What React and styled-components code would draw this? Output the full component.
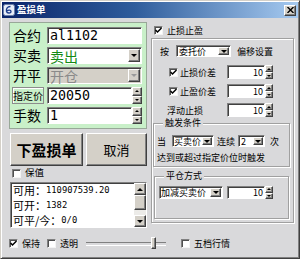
import React from 'react';
import styled, { createGlobalStyle } from 'styled-components';

const CJK = `"Noto Sans CJK SC", "Liberation Sans", sans-serif`;
const MONO = `"DejaVu Sans Mono", "Liberation Mono", monospace`;
const FACE = '#d4d0c8';
const BG = '#d9d9db';

const GlobalStyle = createGlobalStyle`
  html, body { margin: 0; padding: 0; background: #ffffff; }
  * { box-sizing: border-box; }
`;

const raised = `
  border: 1px solid;
  border-color: #ffffff #404040 #404040 #ffffff;
  box-shadow: inset -1px -1px 0 #808080;
`;

const sunken = `
  border: 1px solid;
  border-color: #808080 #ffffff #ffffff #808080;
  box-shadow: inset 1px 1px 0 #404040;
`;

const Window = styled.div`
  width: 300px;
  height: 259px;
  display: flex;
  flex-direction: column;
  padding: 1px;
  background: ${BG};
  border: 1px solid;
  border-color: ${FACE} #404040 #404040 ${FACE};
  box-shadow: inset 1px 1px 0 #ffffff, inset -1px -1px 0 #808080;
  font-family: ${CJK};
  font-size: 9px;
  line-height: 1;
  color: #000;
  overflow: hidden;
`;

const TitleBar = styled.div`
  height: 16px;
  flex: none;
  display: flex;
  align-items: center;
  gap: 2px;
  padding: 0 2px 0 1px;
  background: linear-gradient(90deg, #0a246a 0%, #2f5d9c 45%, #a6caf0 100%);
`;

const TitleText = styled.span`
  color: #fff;
  font-weight: 700;
  font-size: 9.5px;
`;

const CloseBtn = styled.span`
  margin-left: auto;
  width: 12px;
  height: 11px;
  background: ${FACE};
  ${raised}
  display: flex;
  align-items: center;
  justify-content: center;
`;

const Body = styled.div`
  height: 214px;
  flex: none;
  display: flex;
  gap: 4px;
  padding: 4px 4px 0 7px;
`;

const LeftCol = styled.div`
  width: 138px;
  display: flex;
  flex-direction: column;
`;

const OrderPanel = styled.div`
  height: 107px;
  flex: none;
  display: grid;
  grid-template-columns: 34px 95px;
  grid-auto-rows: 17px;
  row-gap: 3px;
  align-items: center;
  padding: 4px 4px 4px 3px;
  background: #c9f0c9;
  border: 1px solid #98a898;
`;

const FieldLabel = styled.span`
  font-size: 14px;
  line-height: 17px;
`;

const LabelBox = styled.span`
  margin-left: -1px;
  width: 32px;
  height: 17px;
  display: flex;
  align-items: center;
  justify-content: center;
  font-size: 10px;
  border: 1px solid #8c8c8c;
  box-shadow: inset 1px 1px 0 #ffffff;
`;

const Field = styled.div`
  height: ${p => p.$h || 17}px;
  width: ${p => (p.$w ? `${p.$w}px` : 'auto')};
  flex: ${p => (p.$grow ? 1 : 'none')};
  display: flex;
  align-items: center;
  background: ${p => (p.$disabled ? FACE : '#ffffff')};
  ${sunken}
`;

const FieldText = styled.span`
  flex: 1;
  padding-left: ${p => p.$pl ?? 2}px;
  padding-right: ${p => p.$pr ?? 0}px;
  font-family: ${p => (p.$mono ? MONO : CJK)};
  font-size: ${p => p.$size || 9}px;
  line-height: 1;
  color: ${p => p.$color || '#000'};
  text-align: ${p => p.$align || 'left'};
  white-space: nowrap;
`;

const DropBtn = styled.span`
  width: ${p => p.$w || 11}px;
  flex: none;
  align-self: stretch;
  margin: 1px;
  background: ${FACE};
  ${raised}
  display: flex;
  align-items: center;
  justify-content: center;
  &::after {
    content: '';
    border-left: 3px solid transparent;
    border-right: 3px solid transparent;
    border-top: 3px solid ${p => (p.$disabled ? '#9a9a9a' : '#000')};
  }
`;

const SpinWrap = styled.div`
  display: flex;
  width: ${p => p.$w}px;
  height: ${p => p.$h}px;
`;

const SpinButtons = styled.div`
  width: ${p => p.$w || 8}px;
  flex: none;
  display: flex;
  flex-direction: column;
`;

const SpinBtn = styled.span`
  flex: 1;
  background: ${FACE};
  ${raised}
  display: flex;
  align-items: center;
  justify-content: center;
  &::after {
    content: '';
    border-left: 2px solid transparent;
    border-right: 2px solid transparent;
    ${p => (p.$down ? 'border-top: 2px solid #000;' : 'border-bottom: 2px solid #000;')}
  }
`;

const ButtonRow = styled.div`
  margin-top: 4px;
  height: 33px;
  display: flex;
  gap: 3px;
  padding-left: 1px;
`;

const PushButton = styled.div`
  width: ${p => p.$w}px;
  background: ${FACE};
  ${raised}
  display: flex;
  align-items: center;
  justify-content: center;
  font-size: ${p => (p.$primary ? 15 : 13)}px;
  font-weight: ${p => (p.$primary ? 700 : 400)};
`;

const CheckLine = styled.div`
  display: flex;
  align-items: center;
  gap: 4px;
  height: ${p => p.$h || 12}px;
  margin-top: ${p => p.$mt || 0}px;
  padding-left: ${p => p.$pl || 0}px;
  font-size: ${p => p.$size || 9}px;
`;

const Box = styled.span`
  width: 9px;
  height: 9px;
  flex: none;
  background: #fff;
  border: 1px solid;
  border-color: #808080 #f4f4f4 #f4f4f4 #808080;
  box-shadow: inset 1px 1px 0 #505050;
  display: flex;
  align-items: center;
  justify-content: center;
`;

const ListBox = styled.div`
  margin: 4px 0 0 1px;
  width: 137px;
  height: 46px;
  display: flex;
  background: #fff;
  ${sunken}
`;

const ListRows = styled.div`
  flex: 1;
  padding-left: 1px;
`;

const ListRow = styled.div`
  height: 15px;
  display: flex;
  align-items: center;
  padding-left: 1px;
  font-size: 11px;
`;

const Digits = styled.span`
  font-family: ${MONO};
  font-size: 8.8px;
`;

const ScrollBar = styled.div`
  width: 12px;
  display: flex;
  flex-direction: column;
  background: #ecebe8;
`;

const ScrollArrow = styled.span`
  height: 12px;
  background: ${FACE};
  ${raised}
  display: flex;
  align-items: center;
  justify-content: center;
  &::after {
    content: '';
    border-left: 3px solid transparent;
    border-right: 3px solid transparent;
    ${p => (p.$down ? 'border-top: 3px solid #000;' : 'border-bottom: 3px solid #000;')}
  }
`;

const ScrollThumb = styled.span`
  height: 15px;
  background: ${FACE};
  ${raised}
`;

const ScrollTrack = styled.span`
  flex: 1;
`;

const RightCol = styled.div`
  width: 143px;
  display: flex;
  flex-direction: column;
`;

const Group = styled.div`
  height: 185px;
  flex: none;
  display: flex;
  flex-direction: column;
  padding-top: 6px;
  border: 1px solid #a0a0a0;
  box-shadow: inset 1px 1px 0 #ffffff, 1px 1px 0 #ffffff;
`;

const Row = styled.div`
  display: flex;
  align-items: center;
  height: ${p => p.$h || 12}px;
  margin-top: ${p => p.$mt || 0}px;
  padding-left: ${p => p.$pl || 0}px;
  gap: ${p => p.$gap || 0}px;
  white-space: nowrap;
`;

const Gap = styled.span`
  width: ${p => p.$w}px;
  flex: none;
`;

const OptionLabel = styled.div`
  width: 75px;
  display: flex;
  align-items: center;
  gap: 2px;
  padding-left: ${p => p.$pl}px;
`;

const Fieldset = styled.fieldset`
  margin: ${p => p.$margin};
  padding: 0 0 ${p => p.$pb}px 0;
  min-width: 0;
  border: 1px solid #a0a0a0;
  box-shadow: inset 1px 1px 0 #ffffff, 1px 1px 0 #ffffff;
`;

const Legend = styled.legend`
  margin-left: 9px;
  padding: 0 2px;
  height: 10px;
  line-height: 10px;
  font-size: 9px;
  background: ${BG};
`;

const BottomBar = styled.div`
  flex: 1;
  display: flex;
  align-items: center;
  padding: 0 0 3px 7px;
`;

const Slider = styled.div`
  position: relative;
  width: 80px;
  height: 14px;
  margin-left: ${p => p.$ml}px;
  &::before {
    content: '';
    position: absolute;
    left: 0;
    right: 0;
    top: 6px;
    height: 2px;
    border-top: 1px solid #808080;
    border-bottom: 1px solid #ffffff;
  }
`;

const SliderThumb = styled.span`
  position: absolute;
  top: 1px;
  width: 5px;
  height: 12px;
  background: ${FACE};
  ${raised}
`;

const Check = ({ checked }) => (
  <Box>
    {checked && (
      <svg width="7" height="7" viewBox="0 0 7 7">
        <path d="M0.5 3 L2.5 5 L6.5 1" fill="none" stroke="#000" strokeWidth="1.5" />
      </svg>
    )}
  </Box>
);

const Spin = ({ w, h, value, size, mono, btnW, align = 'right' }) => (
  <SpinWrap $w={w} $h={h}>
    <Field $h={h} $grow>
      <FieldText $align={align} $pr={1} $size={size} $mono={mono}>{value}</FieldText>
    </Field>
    <SpinButtons $w={btnW}>
      <SpinBtn />
      <SpinBtn $down />
    </SpinButtons>
  </SpinWrap>
);

const Dropdown = ({ w, h = 12, text, btnW, pl, disabled, children }) => (
  <Field $w={w} $h={h} $disabled={disabled}>
    {children || <FieldText $pl={pl}>{text}</FieldText>}
    <DropBtn $w={btnW} $disabled={disabled} />
  </Field>
);

const TitleIcon = () => (
  <svg width="12" height="12" viewBox="0 0 12 12">
    <rect x="0.5" y="0.5" width="11" height="11" rx="2" fill="#e8eef8" stroke="#6a7fa8" />
    <path d="M7.5 2.5 C4 2.5 3 5 3.5 7.5 C4 9.5 8 9.5 8 7.5 C8 5.8 5 5.8 4 7" fill="none" stroke="#1c3c8c" strokeWidth="1.3" />
  </svg>
);

const stats = [
  ['可用：', '110907539.20'],
  ['可开：', '1382'],
  ['可平/今：', '0/0'],
];

export default function App() {
  return (
    <>
      <GlobalStyle />
      <Window>
        <TitleBar>
          <TitleIcon />
          <TitleText>盈损单</TitleText>
          <CloseBtn>
            <svg width="7" height="6" viewBox="0 0 7 6">
              <path d="M0.5 0 L6.5 6 M6.5 0 L0.5 6" stroke="#000" strokeWidth="1.4" />
            </svg>
          </CloseBtn>
        </TitleBar>

        <Body>
          <LeftCol>
            <OrderPanel>
              <FieldLabel>合约</FieldLabel>
              <Field>
                <FieldText $mono $size={13.3}>al1102</FieldText>
              </Field>

              <FieldLabel>买卖</FieldLabel>
              <Dropdown h={17} btnW={12}>
                <FieldText $size={14} $color="#138a13">卖出</FieldText>
              </Dropdown>

              <FieldLabel>开平</FieldLabel>
              <Dropdown h={17} btnW={12} disabled>
                <FieldText $size={14} $color="#8a8a8a">开仓</FieldText>
              </Dropdown>

              <LabelBox>指定价</LabelBox>
              <Spin w={95} h={17} value="20050" size={13.3} mono btnW={10} align="left" />

              <FieldLabel>手数</FieldLabel>
              <Spin w={95} h={17} value="1" size={13.3} mono btnW={10} align="left" />
            </OrderPanel>

            <ButtonRow>
              <PushButton $w={73} $primary>下盈损单</PushButton>
              <PushButton $w={61}>取消</PushButton>
            </ButtonRow>

            <CheckLine $mt={2} $h={10} $pl={3} $size={9.5}>
              <Check />
              <span>保值</span>
            </CheckLine>

            <ListBox>
              <ListRows>
                {stats.map(([k, v]) => (
                  <ListRow key={k}>
                    <span>{k}</span>
                    <Digits>{v}</Digits>
                  </ListRow>
                ))}
              </ListRows>
              <ScrollBar>
                <ScrollArrow />
                <ScrollThumb />
                <ScrollTrack />
                <ScrollArrow $down />
              </ScrollBar>
            </ListBox>
          </LeftCol>

          <RightCol>
            <CheckLine $h={16} $pl={3}>
              <Check checked />
              <span>止损止盈</span>
            </CheckLine>

            <Group>
              <Row $pl={8}>
                <span>按</span>
                <Gap $w={7} />
                <Dropdown w={55} text="委托价" />
                <Gap $w={6} />
                <span>偏移设置</span>
              </Row>

              <Row $h={14} $mt={8}>
                <OptionLabel $pl={17}>
                  <Check checked />
                  <span>止损价差</span>
                </OptionLabel>
                <Spin w={46} h={14} value="10" />
              </Row>
              <Row $h={14} $mt={5}>
                <OptionLabel $pl={17}>
                  <Check checked />
                  <span>止盈价差</span>
                </OptionLabel>
                <Spin w={46} h={14} value="10" />
              </Row>
              <Row $h={14} $mt={5}>
                <OptionLabel $pl={15}>
                  <span>浮动止损</span>
                </OptionLabel>
                <Spin w={46} h={14} value="10" />
              </Row>

              <Fieldset $margin="1px 3px 0 1px" $pb={3}>
                <Legend>触发条件</Legend>
                <Row $mt={7} $pl={3}>
                  <span>当</span>
                  <Gap $w={6} />
                  <Dropdown w={42} text="买卖价" btnW={10} pl={1} />
                  <Gap $w={3} />
                  <span>连续</span>
                  <Gap $w={3} />
                  <Dropdown w={27} text="2" btnW={10} />
                  <Gap $w={5} />
                  <span>次</span>
                </Row>
                <Row $mt={4} $pl={3}>达到或超过指定价位时触发</Row>
              </Fieldset>

              <Fieldset $margin="4px 4px 0 2px" $pb={19}>
                <Legend>平仓方式</Legend>
                <Row $h={13} $mt={5} $pl={4} $gap={4}>
                  <Dropdown w={64} h={13} text="加减买卖价" pl={1} />
                  <Spin w={46} h={13} value="10" />
                </Row>
              </Fieldset>
            </Group>
          </RightCol>
        </Body>

        <BottomBar>
          <CheckLine>
            <Check checked />
            <span>保持</span>
          </CheckLine>
          <CheckLine $pl={7}>
            <Check />
            <span>透明</span>
          </CheckLine>
          <Slider $ml={8}>
            <SliderThumb style={{ left: `${(65 / 80) * 100}%` }} />
          </Slider>
          <CheckLine $pl={15}>
            <Check />
            <span>五档行情</span>
          </CheckLine>
        </BottomBar>
      </Window>
    </>
  );
}
